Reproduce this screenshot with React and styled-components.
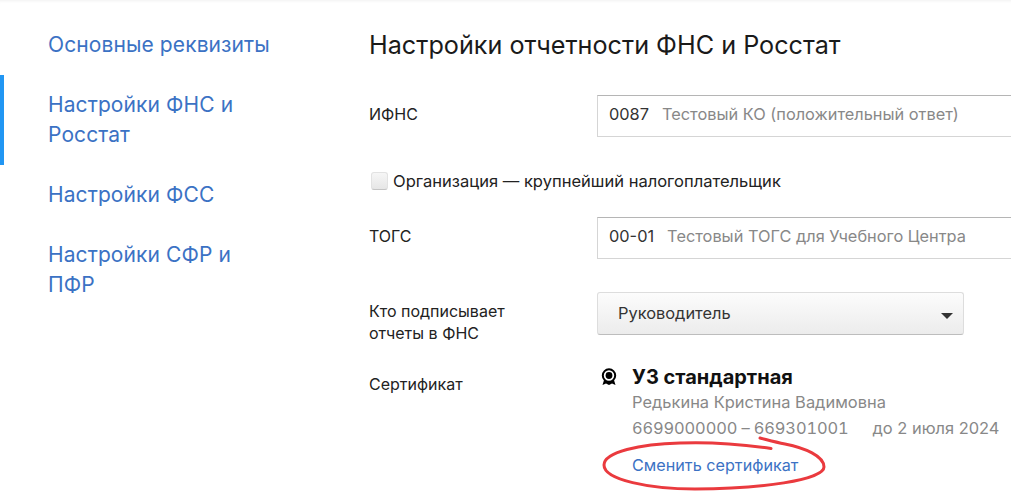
import React from "react";
import styled, { createGlobalStyle } from "styled-components";

const GlobalStyle = createGlobalStyle`
  html, body {
    margin: 0;
    padding: 0;
    height: 495px;
    overflow: hidden;
    background: #fff;
    font-family: "Inter", "Liberation Sans", sans-serif;
  }
`;

const menu = [
  { title: "Основные реквизиты" },
  { title: "Настройки ФНС и Росстат", active: true },
  { title: "Настройки ФСС" },
  { title: "Настройки СФР и ПФР" },
];

const App = () => {
  return (
    <Page>
      <GlobalStyle />
      <Sidebar>
        {menu.map((item) => (
          <MenuItem key={item.title} $active={item.active}>
            {item.title}
          </MenuItem>
        ))}
      </Sidebar>
      <Main>
        <Title>Настройки отчетности ФНС и Росстат</Title>
        <Row>
          <Label>ИФНС</Label>
          <Field>
            <Code>0087</Code>
            <Hint>Тестовый КО (положительный ответ)</Hint>
          </Field>
        </Row>
        <CheckRow>
          <Check />
          Организация — крупнейший налогоплательщик
        </CheckRow>
        <Row>
          <Label>ТОГС</Label>
          <Field>
            <Code>00-01</Code>
            <Hint>Тестовый ТОГС для Учебного Центра</Hint>
          </Field>
        </Row>
        <SignerRow>
          <Label>
            Кто подписывает
            <br />
            отчеты в ФНС
          </Label>
          <Select>
            Руководитель
            <Caret />
          </Select>
        </SignerRow>
        <CertRow>
          <Label>Сертификат</Label>
          <Cert>
            <CertHead>
              <svg width="18" height="18" viewBox="0 0 18 18">
                <path d="M4.2 11.5 L2.5 17 L6 15.6 L9 17 L12 15.6 L15.5 17 L13.8 11.5 Z" fill="#000" />
                <circle cx="9" cy="7.5" r="6.2" fill="#fff" stroke="#000" strokeWidth="2" />
                <circle cx="9" cy="7.5" r="3.4" fill="#000" />
              </svg>
              <CertName>УЗ стандартная</CertName>
            </CertHead>
            <CertLine>Редькина Кристина Вадимовна</CertLine>
            <CertLine>
              <Inn>6699000000 – 669301001</Inn>
              <Until>до 2 июля 2024</Until>
            </CertLine>
            <ChangeLink>Сменить сертификат</ChangeLink>
            <Circled viewBox="0 0 230 60" width="230" height="60">
              <path
                d="M171 14.5 C140 10 105 8 80 9 C40 10 4 18 4 31 C4 46 50 55 95 55 C160 55 224 46 224 33 C224 22 205 14 185 10 C175 8 168 6 160 4"
                fill="none"
                stroke="#ea3a3e"
                strokeWidth="3"
                strokeLinecap="round"
              />
            </Circled>
          </Cert>
        </CertRow>
      </Main>
    </Page>
  );
};

export default App;

const Page = styled.div`
  display: flex;
  height: 495px;
  overflow: hidden;
  box-shadow: inset 0 3px 3px -2px rgba(0, 0, 0, 0.06);
`;

const Sidebar = styled.nav`
  width: 369px;
  flex: none;
  padding-top: 15px;
  box-sizing: border-box;
`;

const MenuItem = styled.div`
  box-sizing: border-box;
  width: 276px;
  padding: 15px 0 15px 44px;
  font-size: 21px;
  letter-spacing: 0.1px;
  line-height: 30px;
  color: #3b72c4;
  border-left: 4px solid ${({ $active }) => ($active ? "#2196f3" : "transparent")};
`;

const Main = styled.main`
  flex: 1;
  min-width: 0;
  padding-top: 25px;
`;

const Title = styled.h1`
  margin: 0 0 30px;
  font-size: 25.2px;
  line-height: 40px;
  font-weight: 400;
  color: #1a1a1a;
`;

const Row = styled.div`
  display: flex;
  align-items: flex-start;
`;

const Label = styled.div`
  width: 228px;
  flex: none;
  padding-top: 8px;
  font-size: 16px;
  line-height: 22px;
  color: #222;
`;

const Field = styled.div`
  display: flex;
  align-items: center;
  box-sizing: border-box;
  width: 460px;
  height: 42px;
  padding: 0 0 4px 11px;
  flex: none;
  border: 1px solid #d5d5d5;
  border-top-color: #b5b5b5;
  font-size: 16.35px;
`;

const Code = styled.span`
  color: #333;
  margin-right: 13px;
`;

const Hint = styled.span`
  color: #888;
`;

const CheckRow = styled.label`
  display: flex;
  align-items: center;
  margin: 29px 0 21px;
  height: 30px;
  font-size: 16.55px;
  color: #222;
`;

const Check = styled.span`
  box-sizing: border-box;
  width: 17px;
  height: 18px;
  margin: 0 5px 0 2px;
  border-radius: 3px;
  border: 1px solid #e2e2e2;
  border-bottom-color: #c4c4c4;
  background: linear-gradient(#f6f6f6, #e6e6e6);
`;

const SignerRow = styled(Row)`
  margin-top: 33px;
`;

const Select = styled.div`
  position: relative;
  box-sizing: border-box;
  width: 367px;
  height: 43px;
  padding: 0 20px 2px;
  display: flex;
  align-items: center;
  border: 1px solid #ddd;
  border-bottom-color: #bdbdbd;
  border-radius: 3px;
  background: linear-gradient(#fcfcfc, #ececec);
  font-size: 16.4px;
  color: #333;
`;

const Caret = styled.span`
  position: absolute;
  right: 10px;
  top: 20px;
  border-left: 6px solid transparent;
  border-right: 6px solid transparent;
  border-top: 6px solid #333;
`;

const CertRow = styled(Row)`
  margin-top: 21px;
`;

const Cert = styled.div`
  position: relative;
  padding-left: 3px;
`;

const CertHead = styled.div`
  display: flex;
  align-items: center;
  gap: 14px;
  height: 24px;
`;

const CertName = styled.div`
  font-size: 20px;
  line-height: 24px;
  font-weight: 700;
  color: #111;
`;

const CertLine = styled.div`
  padding-left: 32px;
  font-size: 16.45px;
  line-height: 26px;
  color: #888;
  white-space: nowrap;
`;

const Inn = styled.span`
  font-variant-numeric: tabular-nums;
  letter-spacing: -0.14px;
`;

const Until = styled.span`
  margin-left: 24px;
`;

const ChangeLink = styled.div`
  padding-left: 32px;
  margin-top: 13px;
  font-size: 16.2px;
  line-height: 22px;
  color: #3b72c4;
`;

const Circled = styled.svg`
  position: absolute;
  left: 3px;
  top: 69px;
`;
